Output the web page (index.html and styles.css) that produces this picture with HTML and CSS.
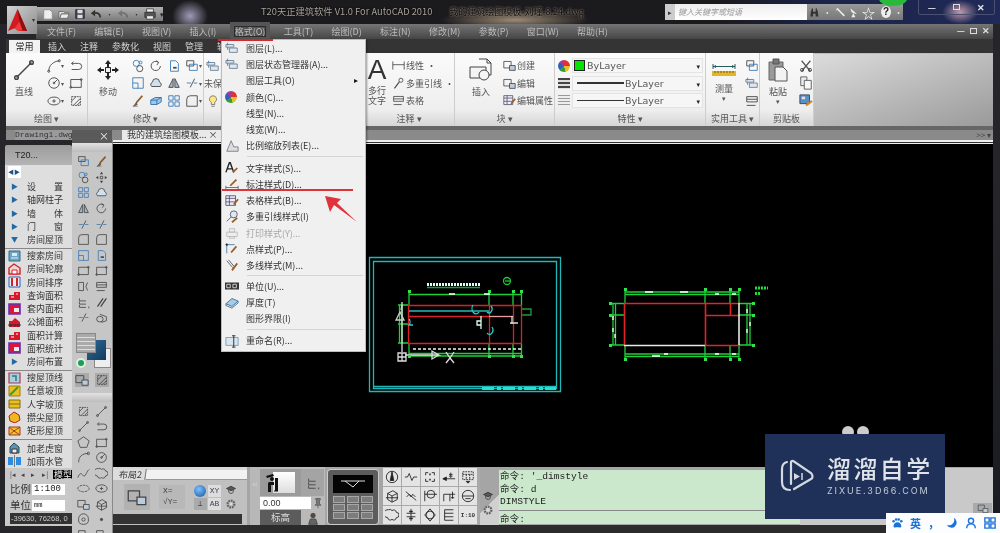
FILE: index.html
```html
<!DOCTYPE html>
<html lang="zh">
<head>
<meta charset="utf-8">
<title>T20天正建筑软件</title>
<link rel="stylesheet" href="styles.css">
</head>
<body>
<svg class="defs" width="0" height="0">
  <symbol id="line" viewBox="0 0 16 16"><path d="M3 13L13 3"/><circle cx="3" cy="13" r="1.200"/><circle cx="13" cy="3" r="1.200"/></symbol>
  <symbol id="move" viewBox="0 0 24 24"><path d="M9.500 9.500h5v5h-5z" fill="#eee" stroke="#222"/><path d="M12 2l3 4h-2v3h-2V6H9zM12 22l3-4h-2v-3h-2v3H9zM1 12l4-3v2h3v2H5v2zM23 12l-4-3v2h-3v2h3v2z" fill="#222" stroke="none"/></symbol>
  <symbol id="insert" viewBox="0 0 24 24"><path d="M10 1h8l4 4v12h-4"/><path d="M18 1v4h4"/><path d="M1 9h16v11H1z" fill="#f4f4f4"/><circle cx="15" cy="17" r="5" fill="#f4f4f4"/></symbol>
  <symbol id="paste" viewBox="0 0 24 24"><path d="M3 4h14v18H3z" fill="#9a9a9a" stroke="#666"/><path d="M7 1h6v5H7z" fill="#777" stroke="#555"/><path d="M9 9h8l4 4v10H9z" fill="#f3f3f3" stroke="#555"/></symbol>
  <symbol id="measure" viewBox="0 0 24 14"><path d="M1 1v5M23 1v5M1 3.500h22" stroke="#2a5a5a"/><path d="M1 3.500l3-1.500v3zM23 3.500l-3-1.500v3z" fill="#2a5a5a" stroke="none"/><path d="M0 8h24v5H0z" fill="#e3b62a" stroke="none"/><path d="M3 8v2M6 8v2M9 8v2M12 8v2M15 8v2M18 8v2M21 8v2" stroke="#7a5a10"/></symbol>
  <symbol id="arc" viewBox="0 0 16 16"><path d="M2 14C2 7 7 3 14 2"/><circle cx="2" cy="14" r="1.200"/><circle cx="14" cy="2" r="1.200"/></symbol>
  <symbol id="circ" viewBox="0 0 16 16"><circle cx="8" cy="8" r="6"/><path d="M8 8L12 4"/><circle cx="8" cy="8" r="1"/></symbol>
  <symbol id="ell" viewBox="0 0 16 16"><ellipse cx="8" cy="8" rx="7" ry="4.500"/><path d="M8 6v4M6 8h4"/></symbol>
  <symbol id="curl" viewBox="0 0 16 16"><path d="M3 5h8a3 3 0 0 1 0 7H3"/><path d="M5 3L3 5l2 2"/></symbol>
  <symbol id="rect" viewBox="0 0 16 16"><path d="M2 4h12v9H2z"/><circle cx="14" cy="4" r="1"/><circle cx="2" cy="13" r="1"/></symbol>
  <symbol id="hatch" viewBox="0 0 16 16"><path d="M3 3h10v10H3z" stroke-dasharray="2 1"/><path d="M3 8l5-5M5 13l8-8M9 13l4-4"/></symbol>
  <symbol id="copyc" viewBox="0 0 16 16"><circle cx="6" cy="5" r="3.500" stroke="#3a79b8"/><circle cx="10" cy="11" r="3.500"/><circle cx="11" cy="4" r="1.600" stroke="#3a79b8"/></symbol>
  <symbol id="rot" viewBox="0 0 16 16"><path d="M13 8a5.300 5.300 0 1 1-2-4.200"/><path d="M8 2l3 2-2 3"/></symbol>
  <symbol id="stretch" viewBox="0 0 16 16"><path d="M4 2h6l3 3v9H4z" stroke="#3a79b8"/><path d="M7 10h4" stroke-width="2"/></symbol>
  <symbol id="squares" viewBox="0 0 16 16"><path d="M2 2h8v6H2z"/><path d="M5 6h9v7H5z" stroke="#3a79b8"/></symbol>
  <symbol id="scale" viewBox="0 0 16 16"><path d="M2 2h12v12H2z" stroke="#3a79b8"/><path d="M2 8h6v6" stroke="#3a79b8"/></symbol>
  <symbol id="cloud" viewBox="0 0 16 16"><path d="M3 12a3 3 0 0 1 1-5 4 4 0 0 1 8 0 3 3 0 0 1 1 5z" fill="#cfe0ef"/></symbol>
  <symbol id="mirror" viewBox="0 0 16 16"><path d="M7 3v10H2zM9 3v10h5z" fill="#9fb7cc"/></symbol>
  <symbol id="trim" viewBox="0 0 16 16"><path d="M2 8h5M10 8h4" stroke="#3a79b8"/><path d="M11 3L6 13"/></symbol>
  <symbol id="scissors" viewBox="0 0 16 16"><path d="M3 2l10 12M13 2L3 14" stroke="#555" stroke-width="1.400"/><circle cx="3.500" cy="12.500" r="1.800"/><circle cx="12.500" cy="12.500" r="1.800"/></symbol>
  <symbol id="copydoc" viewBox="0 0 16 16"><path d="M2 1h7v10H2z" fill="#eee" stroke="#555"/><path d="M6 5h8v10H6z" fill="#f7f7f7" stroke="#555"/></symbol>
  <symbol id="matchp" viewBox="0 0 16 16"><path d="M1 1h11v10H1z" fill="#5b8fc4" stroke="#345"/><path d="M3 3h4v3H3z" fill="#dde" stroke="none"/><path d="M15 8l-7 5" stroke="#d8831c" stroke-width="2.400"/></symbol>
  <symbol id="brush" viewBox="0 0 16 16"><path d="M13 2L6 10" stroke="#8a5a2a" stroke-width="2"/><path d="M6 10l-3 4 4-2z" fill="#c86a2a"/><path d="M2 14h6" stroke="#888"/></symbol>
  <symbol id="box3" viewBox="0 0 16 16"><path d="M2 7l5-3h7v5l-5 3H2z" fill="#9cc8ea" stroke="#2e6fa8"/><path d="M2 7h7v5M9 7l5-3" stroke="#2e6fa8"/></symbol>
  <symbol id="array" viewBox="0 0 16 16"><path d="M2 2h5v5H2zM9 2h5v5H9zM2 9h5v5H2zM9 9h5v5H9z" stroke="#3a79b8"/></symbol>
  <symbol id="fillet" viewBox="0 0 16 16"><path d="M2 14V6a4 4 0 0 1 4-4h8v12z"/></symbol>
  <symbol id="layer" viewBox="0 0 16 16"><path d="M1 4h9v3H1z" fill="#dfe8f0" stroke="#6a7f90"/><path d="M5 8h9v5H5z" fill="#dfe8f0" stroke="#6a7f90"/><path d="M3 2v3M3 7v3" stroke="#3a79b8"/></symbol>
  <symbol id="bulb" viewBox="0 0 16 16"><path d="M8 2a4 4 0 0 1 2 7.500V12H6V9.500A4 4 0 0 1 8 2z" fill="#ffe680" stroke="#777"/><path d="M6 14h4" stroke="#777"/></symbol>
  <symbol id="a-brush" viewBox="0 0 16 16"><path d="M1 13L5 2h1l4 11M3 9h5" stroke="#222" stroke-width="1.600"/><path d="M9 13l5-5" stroke="#9a5b26" stroke-width="2"/></symbol>
  <symbol id="dim-brush" viewBox="0 0 16 16"><path d="M1 12h14" stroke="#666"/><path d="M1 10v4M15 10v4" stroke="#666"/><path d="M13 3L6 10" stroke="#9a5b26" stroke-width="2"/></symbol>
  <symbol id="table-brush" viewBox="0 0 16 16"><path d="M1 2h11v11H1z" fill="#eef" stroke="#556"/><path d="M1 5h11M1 9h11M5 2v11" stroke="#556"/><path d="M15 6l-5 6" stroke="#9a5b26" stroke-width="2"/></symbol>
  <symbol id="mleader" viewBox="0 0 16 16"><circle cx="10" cy="5" r="4" fill="#dfe8ef" stroke="#556"/><path d="M7 8L2 13" stroke="#556"/><path d="M8 14l6-5" stroke="#9a5b26" stroke-width="2"/></symbol>
  <symbol id="leader" viewBox="0 0 16 16"><circle cx="11" cy="4" r="2.500"/><path d="M9 6L3 14" stroke-width="1.400"/></symbol>
  <symbol id="print-brush" viewBox="0 0 16 16"><path d="M2 7h12v5H2zM5 3h6v4H5zM5 12h6v2H5z" fill="#eee" stroke="#bbb"/></symbol>
  <symbol id="pt-brush" viewBox="0 0 16 16"><path d="M2 3h9M2 3v10" stroke="#4a78aa"/><circle cx="2" cy="3" r="1" fill="#111"/><path d="M13 5l-6 7" stroke="#9a5b26" stroke-width="2"/></symbol>
  <symbol id="ml-brush" viewBox="0 0 16 16"><path d="M2 2l7 8M4 1l7 8" stroke="#555"/><path d="M14 5l-6 8" stroke="#9a5b26" stroke-width="2"/></symbol>
  <symbol id="units" viewBox="0 0 16 16"><path d="M0 4h16v8H0z" fill="#333" stroke="none"/><path d="M2 6h4v4H2zM9 6h4v4H9z" stroke="#ddd"/></symbol>
  <symbol id="thick" viewBox="0 0 16 16"><path d="M1 10l7-6 7 3-7 6z" fill="#a8cbe6" stroke="#3a6d9a"/><path d="M1 10v2l7 3 7-6V7" stroke="#3a6d9a"/></symbol>
  <symbol id="rename" viewBox="0 0 16 16"><path d="M1 4h14v9H1z" fill="#d9e6f2" stroke="#7b9ab5"/><path d="M10 2v13M8 2h4M8 15h4" stroke="#222"/></symbol>
  <symbol id="scalelist" viewBox="0 0 16 16"><path d="M2 14L7 2l3 7h5v5z" fill="#ddd" stroke="#778"/></symbol>
  <symbol id="gear" viewBox="0 0 16 16"><circle cx="8" cy="8" r="4.500" stroke="#666" stroke-width="3" stroke-dasharray="2.400 1"/><circle cx="8" cy="8" r="1.500" fill="#ddd" stroke="none"/></symbol>
  <symbol id="hat" viewBox="0 0 16 16"><path d="M2 6l6-3 6 3-6 3z" fill="#555" stroke="#333"/><path d="M5 8v3c2 2 4 2 6 0V8" stroke="#333"/></symbol>
  <symbol id="north" viewBox="0 0 16 16"><circle cx="8" cy="8" r="6.500"/><path d="M8 2l2 10H6z" fill="#222"/></symbol>
  <symbol id="wave" viewBox="0 0 16 16"><path d="M1 8h3l2-4 3 8 2-4h4"/></symbol>
  <symbol id="brack" viewBox="0 0 16 16"><path d="M3 6V3h3M10 3h3v3M13 10v3h-3M6 13H3v-3"/><path d="M8 4v2M8 10v2" stroke-width="1.600"/></symbol>
  <symbol id="elev" viewBox="0 0 16 16"><path d="M1 10h14"/><path d="M1 10l4-2v4z" fill="#222"/><path d="M10 9V3M8 5h4M8 7h4"/></symbol>
  <symbol id="tbl" viewBox="0 0 16 16"><path d="M2 2h12v9H2zM2 5h12M6 5v6M10 5v6" stroke-dasharray="2 1"/><path d="M6 13h4l-2 2z" fill="#222"/></symbol>
  <symbol id="cube" viewBox="0 0 16 16"><path d="M3 5l6-3 5 3v7l-6 3-5-3zM3 5l5 3 6-3M8 8v7"/><path d="M1 10h14"/></symbol>
  <symbol id="zig" viewBox="0 0 16 16"><path d="M2 3l12 10M3 9l3-3 2 3 2-3 3 3"/></symbol>
  <symbol id="cline" viewBox="0 0 16 16"><circle cx="9" cy="6" r="4.500"/><path d="M2 2v12M2 6h14"/></symbol>
  <symbol id="stair" viewBox="0 0 16 16"><path d="M2 14V6h7v8M9 6h6M12 3v8M10 10h4"/></symbol>
  <symbol id="cbar" viewBox="0 0 16 16"><circle cx="8" cy="8" r="6.500"/><path d="M2 8h12M5 11h6"/></symbol>
  <symbol id="blob" viewBox="0 0 16 16"><path d="M4 2a3 3 0 0 1 4 1 3 3 0 0 1 5 2 3 3 0 0 1 0 6 3 3 0 0 1-5 2 3 3 0 0 1-5-2 3 3 0 0 1 1-9z"/></symbol>
  <symbol id="axis" viewBox="0 0 16 16"><path d="M8 1v14M3 6h10M3 10h10"/><path d="M6 4h4M6 12h4" stroke-width="1.600"/></symbol>
  <symbol id="arrows" viewBox="0 0 16 16"><path d="M6.500 6.500h3v3h-3z"/><path d="M8 1l2 3H6zM8 15l2-3H6zM1 8l3-2v4zM15 8l-3-2v4z" fill="#444" stroke="none"/></symbol>
  <symbol id="diam" viewBox="0 0 16 16"><circle cx="8" cy="8" r="4.500"/><path d="M8 1l6 7-6 7-6-7z"/></symbol>
  <symbol id="lines" viewBox="0 0 16 16"><path d="M3 2v12M3 2h10M3 6h10M3 10h10M3 14h10"/></symbol>
  <symbol id="person" viewBox="0 0 16 16"><circle cx="8" cy="4" r="2.500" fill="#5a4a3a"/><path d="M3 14l2-6h6l2 6z" fill="#666"/></symbol>
  <symbol id="surveyor" viewBox="0 0 14 20"><path d="M1 3l7-2 1 2-7 2z" fill="#111" stroke="none"/><circle cx="7" cy="6" r="2" fill="#111" stroke="none"/><path d="M4 9h5v3H6v7H3V10zM10 5h3v13h-3z" fill="#111" stroke="none"/><path d="M9 18h4" stroke="#111"/></symbol>
  <symbol id="pin" viewBox="0 0 16 16"><path d="M5 2h6v2l-1 1v4l2 2H4l2-2V5L5 4zM8 11v4" fill="#777" stroke="#555"/></symbol>
  <symbol id="pent" viewBox="0 0 16 16"><path d="M8 1l7 5-3 8H4L1 6z"/></symbol>
  <symbol id="spline" viewBox="0 0 16 16"><path d="M1 13c3-8 5-4 7-2s4-6 7-8"/></symbol>
  <symbol id="crv" viewBox="0 0 16 16"><path d="M2 14C2 7 6 3 14 3"/><circle cx="14" cy="3" r="1.500"/></symbol>
  <symbol id="ell2" viewBox="0 0 16 16"><path d="M1 8a7 4 0 0 1 14 0M15 8a7 4 0 0 1-14 0" stroke-dasharray="3 1"/></symbol>
  <symbol id="ins" viewBox="0 0 16 16"><path d="M1 3h9v8H1z"/><path d="M8 8h7v6H8z" fill="#bcd"/></symbol>
  <symbol id="wb" viewBox="0 0 16 16"><path d="M2 7a6 6 0 0 1 12 0v3a6 4 0 0 1-12 0z"/><circle cx="8" cy="8" r="2"/></symbol>
  <symbol id="dot" viewBox="0 0 16 16"><circle cx="8" cy="8" r="1.400" fill="#444"/></symbol>
  <symbol id="dims" viewBox="0 0 16 16"><path d="M2 3h6M2 3v10h6M8 3v10M11 8l2-5M11 8l2 5"/></symbol>
  <symbol id="dims2" viewBox="0 0 16 16"><path d="M2 3h12v6H2zM2 6h12M2 13h10"/></symbol>
  <symbol id="dims3" viewBox="0 0 16 16"><path d="M3 3v3h8M3 7v3h8M3 11v3h8"/><path d="M14 14h1" stroke-width="2"/></symbol>
  <symbol id="linear" viewBox="0 0 16 16"><path d="M1 3v10M15 3v10M1 7h14"/></symbol>
  <symbol id="slash" viewBox="0 0 16 16"><path d="M3 13L10 3M7 13l7-10" stroke-width="1.500"/></symbol>
  <symbol id="cyl" viewBox="0 0 16 16"><ellipse cx="6" cy="10" rx="4" ry="3.500"/><path d="M6 4l8 3v5l-6 2"/></symbol>

  <symbol id="q-new" viewBox="0 0 14 14"><path d="M2 2h7l3 3v8H2z" fill="#eee" stroke="#888"/></symbol>
  <symbol id="q-open" viewBox="0 0 14 14"><path d="M1 4h5l1 1h5v2H4l-2 5H1z" fill="#ddd" stroke="#666"/><path d="M4 7h9l-2 5H2z" fill="#eee" stroke="#666"/></symbol>
  <symbol id="q-save" viewBox="0 0 14 14"><path d="M2 2h10v10H2z" fill="#445" stroke="#223"/><path d="M4 2h6v4H4zM4 8h6v4H4z" fill="#ddd" stroke="none"/></symbol>
  <symbol id="q-undo" viewBox="0 0 14 14"><path d="M12 11c0-4-3-6-7-5" stroke="#333" stroke-width="2"/><path d="M6 2L1 6l5 4z" fill="#333" stroke="none"/></symbol>
  <symbol id="q-print" viewBox="0 0 14 14"><path d="M3 1h8v4H3z" fill="#eee" stroke="#444"/><path d="M1 5h12v6H1z" fill="#555" stroke="#333"/><path d="M3 9h8v4H3z" fill="#eee" stroke="#444"/></symbol>
  <symbol id="binoc" viewBox="0 0 16 16"><path d="M2 14l1-9h3v9zM14 14l-1-9h-3v9zM6 7h4v3H6zM4 2h2v3H4zM10 2h2v3h-2z" fill="#333" stroke="none"/></symbol>
  <symbol id="wrench" viewBox="0 0 16 16"><path d="M3 2l3 3 8 8" stroke="#eee" stroke-width="2.400"/><path d="M2 5a3 3 0 0 1 3-3" stroke="#eee"/></symbol>
  <symbol id="dish" viewBox="0 0 16 16"><path d="M4 2c0 6 4 8 9 8z" fill="#eee" stroke="none"/><path d="M8 9l-3 6h6z" fill="#eee" stroke="none"/></symbol>

  <symbol id="r1" viewBox="0 0 13 12"><path d="M1 1h11v10H1z" fill="#6aa7c4" stroke="#3b6a85"/><path d="M4 3h5v3H4z" fill="#dfeaf0" stroke="none"/><path d="M3 8h7" stroke="#dfeaf0"/></symbol>
  <symbol id="r2" viewBox="0 0 13 12"><path d="M1 11V5l5-4 6 4v6z" fill="#f3d5d5" stroke="#d0242c" stroke-width="1.400"/><path d="M4 7h5v4H4z" fill="#fff" stroke="#d0242c"/></symbol>
  <symbol id="r3" viewBox="0 0 13 12"><path d="M1 1h11v10H1z" fill="#eee" stroke="#2f5fb5"/><path d="M4 2v8" stroke="#d0242c" stroke-width="2"/><path d="M9 2v8" stroke="#d0242c" stroke-width="2"/></symbol>
  <symbol id="r4" viewBox="0 0 13 12"><path d="M1 11V6h5V3h6v8z" fill="#d8182a" stroke="none"/><path d="M3 8h3M8 5h2" stroke="#fff"/></symbol>
  <symbol id="r5" viewBox="0 0 13 12"><path d="M1 1h11v10H1z" fill="#d8183a" stroke="#6a2fb5" stroke-width="1.600"/><path d="M6 5h5v4H6z" fill="#eee" stroke="none"/></symbol>
  <symbol id="r6" viewBox="0 0 13 12"><path d="M1 11V5h3l3-3 5 4v5z" fill="#d8182a" stroke="none"/><path d="M0 9h13M3 11V8M7 11V8M10 11V8" stroke="#333"/></symbol>
  <symbol id="t1" viewBox="0 0 13 12"><path d="M1 1h11v10H1z" fill="#a9cfd9" stroke="#a83a5a" stroke-width="1.200"/><path d="M4 4h4v5" stroke="#2b7a95" stroke-width="1.500"/></symbol>
  <symbol id="t2" viewBox="0 0 13 12"><path d="M1 11V1h11v10z" fill="#e8c020" stroke="#a37a10"/><path d="M2 10l8-8" stroke="#3a9a3a" stroke-width="2"/></symbol>
  <symbol id="t3" viewBox="0 0 13 12"><path d="M1 2h11v8H1z" fill="#e8c020" stroke="#8a6a10"/><path d="M1 6h11" stroke="#8a6a10"/></symbol>
  <symbol id="t4" viewBox="0 0 13 12"><path d="M6 1l5 3 1 5-5 3-5-2-1-5z" fill="#f0b820" stroke="#b52020"/></symbol>
  <symbol id="t5" viewBox="0 0 13 12"><path d="M1 2h11v8H1z" fill="#f0c030" stroke="#a83a20"/><path d="M1 2l5 4 6-4M1 10l5-4M12 10L6 6" stroke="#a83a20"/></symbol>
  <symbol id="t6" viewBox="0 0 13 12"><path d="M2 5l4-4 5 4v6H2z" fill="#5a94b0" stroke="#2a4a5a"/><path d="M4 7h5v4H4z" fill="#eee" stroke="#333"/></symbol>
  <symbol id="t7" viewBox="0 0 13 12"><path d="M0 2h5v8H0zM8 2h5v8H8z" fill="#2c8ce0" stroke="none"/><path d="M6.500 0v12" stroke="#777"/></symbol>
</svg>

<div class="app">
  <div class="titlebar">
    <div class="logo">
      <svg class="logo-a" viewBox="0 0 22 26"><path d="M10 1L0 24l7-3 4 3 9 0z" fill="#d01c20" stroke="none"/><path d="M10 1l10 23-5-1-3-9z" fill="#8e0e12" stroke="none"/><path d="M7 21l5-7 3 9-4 1z" fill="#f03a3a" stroke="none"/></svg>
      <span class="logo-caret">▾</span>
    </div>
    <div class="qat">
      <svg class="q"><use href="#q-new"/></svg><svg class="q"><use href="#q-open"/></svg><svg class="q"><use href="#q-save"/></svg><svg class="q"><use href="#q-undo"/></svg><i>·</i><svg class="q faint"><use href="#q-undo"/></svg><i>·</i><svg class="q"><use href="#q-print"/></svg><i>▾</i>
    </div>
    <div class="title">T20天正建筑软件 V1.0 For AutoCAD 2010<span class="title-file">我的建筑绘图模板-刘瑾-8.24.dwg</span></div>
    <div class="search"><span class="search-arrow">▸</span><span class="search-hint">键入关键字或短语</span></div>
    <div class="helpbar">
      <svg class="h"><use href="#binoc"/></svg><i>·</i><svg class="h"><use href="#wrench"/></svg><svg class="h"><use href="#dish"/></svg><span class="star">☆</span><span class="qmark">?</span><i>·</i>
    </div>
    <div class="winbtns"><span>—</span><span class="sq"></span><span class="x">✕</span></div>
    <span class="greenblob"></span>
  </div>

  <div class="menubar">
    <span>文件(F)</span><span>编辑(E)</span><span>视图(V)</span><span>插入(I)</span><span class="active">格式(O)</span><span>工具(T)</span><span>绘图(D)</span><span>标注(N)</span><span>修改(M)</span><span>参数(P)</span><span>窗口(W)</span><span>帮助(H)</span>
    <div class="docbtns"><span>—</span><span class="sq"></span><span>✕</span></div>
  </div>

  <div class="tabstrip">
    <span class="tab on">常用</span><span class="tab">插入</span><span class="tab">注释</span><span class="tab">参数化</span><span class="tab">视图</span><span class="tab">管理</span><span class="tab">输出</span>
  </div>

  <div class="ribbon">
    <section class="panel p-draw">
      <div class="pbody">
        <div class="big"><svg class="bigi"><use href="#line"/></svg><b>直线</b></div>
        <div class="g2">
          <span class="b c"><svg><use href="#arc"/></svg></span><span class="b"><svg><use href="#curl"/></svg></span>
          <span class="b c"><svg><use href="#circ"/></svg></span><span class="b"><svg><use href="#rect"/></svg></span>
          <span class="b c"><svg><use href="#ell"/></svg></span><span class="b"><svg><use href="#hatch"/></svg></span>
        </div>
      </div>
      <footer>绘图 ▾</footer>
    </section>
    <section class="panel p-mod">
      <div class="pbody">
        <div class="big move"><svg class="bigi"><use href="#move"/></svg><b>移动</b></div>
        <div class="g4">
          <span class="b"><svg><use href="#copyc"/></svg></span><span class="b"><svg><use href="#rot"/></svg></span><span class="b"><svg><use href="#stretch"/></svg></span><span class="b c"><svg><use href="#squares"/></svg></span>
          <span class="b"><svg><use href="#scale"/></svg></span><span class="b"><svg><use href="#cloud"/></svg></span><span class="b"><svg><use href="#mirror"/></svg></span><span class="b c"><svg><use href="#trim"/></svg></span>
          <span class="b"><svg><use href="#brush"/></svg></span><span class="b"><svg><use href="#box3"/></svg></span><span class="b"><svg><use href="#array"/></svg></span><span class="b c"><svg><use href="#fillet"/></svg></span>
        </div>
      </div>
      <footer>修改 ▾</footer>
    </section>
    <section class="panel p-layer">
      <div class="pbody col">
        <span class="b"><svg><use href="#layer"/></svg></span>
        <span class="b txt">未保</span>
        <span class="b"><svg><use href="#bulb"/></svg></span>
      </div>
      <footer></footer>
    </section>
    <section class="panel p-note">
      <div class="pbody">
        <div class="big bigA"><span class="aa">A</span><b>多行<br>文字</b></div>
        <div class="rows">
          <span class="r"><svg><use href="#linear"/></svg>线性 <i>·</i></span>
          <span class="r"><svg><use href="#leader"/></svg>多重引线 <i>·</i></span>
          <span class="r"><svg><use href="#dims2"/></svg>表格</span>
        </div>
      </div>
      <footer>注释 ▾</footer>
    </section>
    <section class="panel p-block">
      <div class="pbody">
        <div class="big ins"><svg class="bigi"><use href="#insert"/></svg><b>插入</b></div>
        <div class="rows">
          <span class="r"><svg><use href="#ins"/></svg>创建</span>
          <span class="r"><svg><use href="#ins"/></svg>编辑</span>
          <span class="r"><svg><use href="#table-brush"/></svg>编辑属性 <i>·</i></span>
        </div>
      </div>
      <footer>块 ▾</footer>
    </section>
    <section class="panel p-prop">
      <div class="pbody props">
        <div class="prow"><span class="wheel"></span><div class="combo"><span class="swatch"></span><span>ByLayer</span><i>▾</i></div></div>
        <div class="prow"><span class="bars"></span><div class="combo"><span class="ln thick-ln"></span><span>ByLayer</span><i>▾</i></div></div>
        <div class="prow"><span class="bars dash"></span><div class="combo"><span class="ln"></span><span>ByLayer</span><i>▾</i></div></div>
      </div>
      <footer>特性 ▾</footer>
    </section>
    <section class="panel p-util">
      <div class="pbody">
        <div class="big meas"><svg class="ruler"><use href="#measure"/></svg><b>测量</b><u>▾</u></div>
        <div class="col tight">
          <span class="b"><svg><use href="#squares"/></svg></span><span class="b"><svg><use href="#layer"/></svg></span><span class="b"><svg><use href="#dims2"/></svg></span>
        </div>
      </div>
      <footer>实用工具 ▾</footer>
    </section>
    <section class="panel p-clip">
      <div class="pbody">
        <div class="big paste"><svg class="bigi"><use href="#paste"/></svg><b>粘贴</b><u>▾</u></div>
        <div class="col tight">
          <span class="b"><svg><use href="#scissors"/></svg></span><span class="b"><svg><use href="#copydoc"/></svg></span><span class="b"><svg><use href="#matchp"/></svg></span>
        </div>
      </div>
      <footer>剪贴板</footer>
    </section>
    <div class="ribbon-rest"></div>
  </div>

  <div class="doctabs">
    <span class="dtab">Drawing1.dwg</span>
    <span class="dtab cur">我的建筑绘图模板... ×</span>
    <span class="more">&gt;&gt; ▾</span>
  </div>

  <div class="work">
    <div class="dock">
      <div class="dock-head">T20...</div>
      <div class="dock-list">
        <div class="toggle"><span>◀</span><span>▶</span></div>
        <div class="li"><em>▶</em><span>设置</span></div>
        <div class="li"><em>▶</em><span>轴网柱子</span></div>
        <div class="li"><em>▶</em><span>墙体</span></div>
        <div class="li"><em>▶</em><span>门窗</span></div>
        <div class="li open"><em>▼</em><span>房间屋顶</span></div>
        <div class="li"><svg><use href="#r1"/></svg><span>搜索房间</span></div>
        <div class="li"><svg><use href="#r2"/></svg><span>房间轮廓</span></div>
        <div class="li"><svg><use href="#r3"/></svg><span>房间排序</span></div>
        <div class="li"><svg><use href="#r4"/></svg><span>查询面积</span></div>
        <div class="li"><svg><use href="#r5"/></svg><span>套内面积</span></div>
        <div class="li"><svg><use href="#r6"/></svg><span>公摊面积</span></div>
        <div class="li"><svg><use href="#r4"/></svg><span>面积计算</span></div>
        <div class="li"><svg><use href="#r5"/></svg><span>面积统计</span></div>
        <div class="li open"><em>▶</em><span>房间布置</span></div>
        <div class="li"><svg><use href="#t1"/></svg><span>搜屋顶线</span></div>
        <div class="li"><svg><use href="#t2"/></svg><span>任意坡顶</span></div>
        <div class="li"><svg><use href="#t3"/></svg><span>人字坡顶</span></div>
        <div class="li"><svg><use href="#t4"/></svg><span>攒尖屋顶</span></div>
        <div class="li open"><svg><use href="#t5"/></svg><span>矩形屋顶</span></div>
        <div class="li next"><svg><use href="#t6"/></svg><span>加老虎窗</span></div>
        <div class="li"><svg><use href="#t7"/></svg><span>加雨水管</span></div>
      </div>
      <div class="dock-low">
        <div class="nav"><span>|◂</span><span>◂</span><span>▸</span><span>▸|</span><span class="model">模型</span></div>
        <div class="field"><label>比例</label><span class="inp">1:100</span></div>
        <div class="field small"><label>单位</label><span class="inp">mm</span></div>
        <div class="coords">-39630, 76268, 0</div>
      </div>
    </div>

    <div class="floatbar">
      <div class="fb-head">×</div>
      <div class="fb-grip"></div>
      <div class="fb-grid">
        <svg><use href="#squares"/></svg><svg><use href="#brush"/></svg>
        <svg><use href="#copyc"/></svg><svg><use href="#arrows"/></svg>
        <svg><use href="#array"/></svg><svg><use href="#cloud"/></svg>
        <svg><use href="#mirror"/></svg><svg><use href="#rot"/></svg>
        <svg><use href="#trim"/></svg><svg><use href="#trim"/></svg>
        <svg><use href="#fillet"/></svg><svg><use href="#fillet"/></svg>
        <svg><use href="#scale"/></svg><svg><use href="#stretch"/></svg>
        <svg><use href="#rect"/></svg><svg><use href="#rect"/></svg>
        <svg><use href="#dims"/></svg><svg><use href="#dims2"/></svg>
        <svg><use href="#dims3"/></svg><svg><use href="#slash"/></svg>
        <svg><use href="#trim"/></svg><svg><use href="#cyl"/></svg>
      </div>
      <div class="material">
        <span class="m3"></span><span class="m2"></span><span class="m1"></span><span class="mdot"></span>
      </div>
      <div class="mbtns"><svg><use href="#ins"/></svg><svg><use href="#hatch"/></svg></div>
      <div class="fb-grip low"></div>
      <div class="fb-grid second">
        <svg><use href="#hatch"/></svg><svg><use href="#line"/></svg>
        <svg><use href="#line"/></svg><svg><use href="#curl"/></svg>
        <svg><use href="#pent"/></svg><svg><use href="#rect"/></svg>
        <svg><use href="#crv"/></svg><svg><use href="#circ"/></svg>
        <svg><use href="#spline"/></svg><svg><use href="#blob"/></svg>
        <svg><use href="#ell2"/></svg><svg><use href="#ell"/></svg>
        <svg><use href="#ins"/></svg><svg><use href="#cube"/></svg>
        <svg><use href="#wb"/></svg><svg><use href="#dot"/></svg>
        <svg><use href="#squares"/></svg><svg><use href="#squares"/></svg>
      </div>
    </div>

    <div class="center">
      <div class="viewport">
        <svg class="cad" viewBox="113 145 880 322" width="880" height="322">
          <g fill="none" stroke-width="1.300">
            <path d="M369.500 257.500h191v134h-191zM373.500 261.500h183v127h-183z" stroke="#1fb8b8"/>
            <path d="M373 386.500h184" stroke="#1fb8b8"/>
            <path d="M482 388.500h74" stroke="#23e0d0" stroke-width="3" stroke-dasharray="12 3 4 2"/>
            <path d="M427 284.500h53" stroke="#dff" stroke-width="3" stroke-dasharray="2 1"/>
            <path d="M427 287.500h53" stroke="#1e9a3a"/>
            <circle cx="507" cy="281" r="3.500" stroke="#1ec83a"/>
            <path d="M505 281h6" stroke="#1ec83a"/>
            <path d="M409 294.500h113M409 292v13M409 343v13M489 291v14M489 343v13M513 292v13M513 343v13M521.500 291v14M521.500 343v13M409 353.500h113M409 356h113" stroke="#1fcf3a"/>
            <path d="M399.500 305v38M402 305v38M398 305h10M398 343h10M398 324h10" stroke="#1fcf3a"/>
            <path d="M522 309h9v6h-9" stroke="#1f9a3a"/>
            <path d="M449 294h6M484 294h6" stroke="#fff"/>
            <path d="M413 349h108" stroke="#e8ffe8" stroke-dasharray="3 2"/>
            <path d="M408 305.500h114M408 343.500h114M408.500 305v38M489.500 305v38M513.500 305v38M521.500 305v38M408 316.500h81" stroke="#d8222a"/>
            <path d="M409 311h80" stroke="#2ab8b8"/>
            <path d="M489 316.500h24" stroke="#ef9ca0"/>
            <path d="M481 316v13M481 321h-4v4h4" stroke="#dfe"/>
            <path d="M402 302v50M398 353h8v8h-8zM402 353v8M398 357h8" stroke="#ddd"/>
            <path d="M405 355h29l5 0-7-4v8l7-4" stroke="#ddd"/>
            <path d="M446 352l4 6 4-6M450 358l-4 5M450 358l4 5" stroke="#ddd"/>
            <path d="M404 320l-4-8-4 8zM402 305l-1 5" stroke="#ccc"/>
            <path d="M409 319a3 4 0 0 1 0 6h4M473 305a3 4 0 0 0 6 7M491 306a3 4 0 0 1-4 6M492 327a3 4 0 0 1-5 6" stroke="#2dc9c9"/>
            <path d="M512 316v8M510 323h8" stroke="#ddd"/>
            <path d="M625 292h114M625 294.500h114M625 354h114M625 356.500h114M625 289v14M625 345v15M705 289v14M705 345v15M730 289v14M730 345v15M739 289v14M739 345v15M613 303v42M615.500 303v42M610 303.500h14M610 345h14M610 315h14M747 303v42M750 303v42M739 303.500h14M739 345h14M739 315h14" stroke="#1fcf3a"/>
            <path d="M624.500 303v42M624 303.500h115M705.500 303v42M705 315.500h34M730.500 303v12M705 345.500h34" stroke="#e0242a" stroke-width="1.600"/>
            <path d="M624 345.500h81M739 303v42" stroke="#e8e8e8" stroke-width="1.600"/>
            <path d="M645 292h8M680 292h8M652 356h8M715 294h4M732 294h4M664 354h4M715 354h4M732 354h4M613 316v4M613 328v4M615 334v4M747 309v4M750 322v4M747 329v4" stroke="#fff"/>
            <path d="M755 288h13" stroke="#18e038" stroke-width="3" stroke-dasharray="2 1"/>
            <path d="M755 293.500h6" stroke="#18e038" stroke-width="3" stroke-dasharray="2 1"/>
          </g>
          <g fill="#2fe34a">
            <rect x="408" y="290" width="3" height="3"/><rect x="488" y="290" width="3" height="3"/><rect x="512" y="290" width="3" height="3"/><rect x="520" y="290" width="3" height="3"/>
            <rect x="408" y="355" width="3" height="3"/><rect x="488" y="355" width="3" height="3"/><rect x="512" y="355" width="3" height="3"/><rect x="520" y="355" width="3" height="3"/>
            <rect x="624" y="288" width="3" height="3"/><rect x="704" y="288" width="3" height="3"/><rect x="729" y="288" width="3" height="3"/><rect x="738" y="288" width="3" height="3"/>
            <rect x="624" y="358" width="3" height="3"/><rect x="704" y="358" width="3" height="3"/><rect x="729" y="358" width="3" height="3"/><rect x="738" y="358" width="3" height="3"/>
            <rect x="609" y="302" width="3" height="3"/><rect x="609" y="314" width="3" height="3"/><rect x="609" y="344" width="3" height="3"/>
            <rect x="752" y="302" width="3" height="3"/><rect x="752" y="314" width="3" height="3"/><rect x="752" y="344" width="3" height="3"/>
          </g>
          <g fill="#ccc"><ellipse cx="848" cy="432" rx="6" ry="6"/><ellipse cx="863" cy="432" rx="6" ry="6"/></g>
        </svg>
      </div>

      <div class="status">
        <div class="st-left">
          <div class="layouts"><span class="ltab">布局2</span><span class="lfill"></span></div>
          <div class="st-tools">
            <span class="bigbtn"><svg><use href="#ins"/></svg></span>
            <span class="frac"><i>X=</i><i>√Y=</i></span>
            <span class="xy"><span class="globe"></span><span class="mono">XY</span><span class="mono faint2">⊥</span><span class="mono">AB</span></span>
            <span class="hatcol"><svg><use href="#hat"/></svg><svg><use href="#gear"/></svg></span>
          </div>
          <div class="st-bar"></div>
        </div>
        <div class="handle">‹‹</div>
        <div class="st-elev">
          <span class="el-main"><span class="el-box"></span><svg><use href="#surveyor"/></svg></span>
          <span class="el-side"><svg><use href="#dims3"/></svg></span>
          <span class="el-input">0.00</span>
          <span class="el-pin"><svg><use href="#pin"/></svg></span>
          <span class="el-label">标高</span>
          <span class="el-side2"><svg><use href="#person"/></svg></span>
        </div>
        <div class="st-pad">
          <div class="lcd"><svg viewBox="0 0 40 18"><path d="M8 6h24M12 6l8 6 6-6" stroke="#ddd" fill="none"/></svg></div>
          <div class="padbtns"><span></span><span></span><span></span><span></span><span></span><span></span><span></span><span></span><span></span></div>
        </div>
        <div class="st-grid">
          <span><svg><use href="#north"/></svg></span><span><svg><use href="#wave"/></svg></span><span><svg><use href="#brack"/></svg></span><span><svg><use href="#elev"/></svg></span><span><svg><use href="#tbl"/></svg></span>
          <span><svg><use href="#cube"/></svg></span><span><svg><use href="#zig"/></svg></span><span><svg><use href="#cline"/></svg></span><span><svg><use href="#stair"/></svg></span><span><svg><use href="#cbar"/></svg></span>
          <span><svg><use href="#blob"/></svg></span><span><svg><use href="#axis"/></svg></span><span><svg><use href="#diam"/></svg></span><span><svg><use href="#lines"/></svg></span><span class="i110">I:10</span>
        </div>
        <div class="st-gears"><svg><use href="#hat"/></svg><svg><use href="#gear"/></svg></div>
        <div class="cmd">
          <div class="cmd-hist"><p>命令: '_dimstyle</p><p>命令: d</p><p>DIMSTYLE</p></div>
          <div class="cmd-in">命令:</div>
        </div>
        <div class="st-right">
          <span class="carbtn"><svg><use href="#ins"/></svg></span>
        </div>
      </div>
      <div class="basebar"></div>
    </div>
    <div class="rightedge"></div>
  </div>

  <div class="menu">
    <div class="mi"><svg><use href="#layer"/></svg><span>图层(L)...</span></div>
    <div class="mi"><svg><use href="#layer"/></svg><span>图层状态管理器(A)...</span></div>
    <div class="mi arrow"><span class="noi"></span><span>图层工具(O)</span></div>
    <div class="mi"><span class="wheel mw"></span><span>颜色(C)...</span></div>
    <div class="mi"><span class="noi"></span><span>线型(N)...</span></div>
    <div class="mi"><span class="noi"></span><span>线宽(W)...</span></div>
    <div class="mi"><svg><use href="#scalelist"/></svg><span>比例缩放列表(E)...</span></div>
    <hr>
    <div class="mi"><svg><use href="#a-brush"/></svg><span>文字样式(S)...</span></div>
    <div class="mi"><svg><use href="#dim-brush"/></svg><span>标注样式(D)...</span></div>
    <div class="mi"><svg><use href="#table-brush"/></svg><span>表格样式(B)...</span></div>
    <div class="mi"><svg><use href="#mleader"/></svg><span>多重引线样式(I)</span></div>
    <div class="mi off"><svg><use href="#print-brush"/></svg><span>打印样式(Y)...</span></div>
    <div class="mi"><svg><use href="#pt-brush"/></svg><span>点样式(P)...</span></div>
    <div class="mi"><svg><use href="#ml-brush"/></svg><span>多线样式(M)...</span></div>
    <hr class="thin">
    <div class="mi"><svg><use href="#units"/></svg><span>单位(U)...</span></div>
    <div class="mi"><svg><use href="#thick"/></svg><span>厚度(T)</span></div>
    <div class="mi"><span class="noi"></span><span>图形界限(I)</span></div>
    <hr>
    <div class="mi"><svg><use href="#rename"/></svg><span>重命名(R)...</span></div>
  </div>

  <svg class="anno" viewBox="0 0 1000 533" width="1000" height="533">
    <path d="M218 40h55" stroke="#d8262c" stroke-width="2"/>
    <path d="M222 190h131" stroke="#e0323a" stroke-width="2"/>
    <path d="M325 196l16 3-4 4 20 19-23-17-4 7z" fill="#e0323a"/>
  </svg>

  <div class="wm">
    <svg class="wm-logo" viewBox="0 0 60 60"><path d="M17 17C13 18 12 21 12 24V37C12 42 15 45 20 45" fill="none" stroke="#d4d9e2" stroke-width="2.200" stroke-linecap="round"/><path d="M21 17V39M21 17C21 16 22 15.500 24 16.500L41 28C43 30 43 33 41 34L24 44" fill="none" stroke="#d4d9e2" stroke-width="2.200" stroke-linecap="round"/><path d="M24 28L30 31.500L24 35z" fill="#d4d9e2"/><path d="M32 28V35" stroke="#d4d9e2" stroke-width="1.500"/></svg>
    <div class="wm-text"><div class="wm-cn">溜溜自学</div><div class="wm-en">ZIXUE.3D66.COM</div></div>
  </div>

  <div class="ime">
    <svg viewBox="0 0 14 14"><circle cx="3" cy="5" r="1.500"/><circle cx="6" cy="3" r="1.500"/><circle cx="9" cy="3" r="1.500"/><circle cx="12" cy="5" r="1.500"/><path d="M3 11c0-4 3-5 4.500-5S12 7 12 11c0 2-3 1-4.500 1S3 13 3 11z"/></svg>
    <span>英</span><span>，</span>
    <svg viewBox="0 0 14 14"><path d="M9 1a6 6 0 1 1-8 8 6 6 0 0 0 8-8z"/></svg>
    <svg viewBox="0 0 14 14" class="ol"><circle cx="7" cy="4.500" r="3"/><path d="M2 13c0-3 2-5 5-5s5 2 5 5"/></svg>
    <svg viewBox="0 0 14 14" class="ol"><path d="M1 1h5v5H1zM8 1h5v5H8zM1 8h5v5H1zM8 8h5v5H8z"/></svg>
  </div>
</div>
</body>
</html>
```

FILE: styles.css
```css
* { box-sizing: border-box; }
html, body { margin: 0; padding: 0; background: #222; }
body { font-family: "Noto Sans CJK SC", "Noto Sans", sans-serif; font-size: 9px; line-height: 1; }
.defs { position: absolute; }
svg { fill: none; stroke: #444; stroke-width: 1; }
i, em, u { font-style: normal; text-decoration: none; }

.app { position: relative; width: 1000px; height: 533px; overflow: hidden; display: flex; flex-direction: column; background: #26262a; filter: blur(.35px); }

/* title bar */
.titlebar { height: 24px; flex: none; display: flex; align-items: flex-start; position: relative;
  background:
    radial-gradient(ellipse 18px 16px at 190px 16px, #a09ab8, transparent),
    radial-gradient(ellipse 75px 10px at 515px 20px, #9c8a74, transparent),
    radial-gradient(ellipse 18px 12px at 960px 12px, #c09aaa, transparent),
    linear-gradient(90deg, #1b1a1d 0, #1b1a1d 72%, #1a2348 82%, #202a58 100%); }
.logo { width: 30px; height: 28px; margin: 6px 0 0 7px; background: linear-gradient(135deg, #d2d2d2, #8b8b8b); position: relative; z-index: 3; display: flex; align-items: center; padding-left: 1px; flex: none; }
.logo-a { width: 21px; height: 25px; stroke: none; }
.logo-caret { position: absolute; right: 2px; top: 11px; font-size: 6px; color: #333; }
.qat { width: 126px; height: 14px; margin-top: 7px; background: linear-gradient(#b0b0b0, #7a7a7a); display: flex; align-items: center; gap: 4px; padding-left: 5px; color: #333; flex: none; }
.qat .q { width: 12px; height: 12px; flex: none; }
.qat .faint { opacity: .35; }
.qat i { font-size: 7px; color: #222; }
.title { width: 404px; margin: 5px 0 0 98px; font-size: 9.300px; line-height: 13px; color: #a6a29a; white-space: pre; text-shadow: 0 0 2px #000; flex: none; }
.title-file { margin-left: 17px; color: #0e0a08; font-size: 9px; text-shadow: 0 0 2px #cdbfae; }
.search { width: 142px; height: 16px; margin: 4px 0 0 0; background: linear-gradient(#eee, #fff); display: flex; align-items: center; flex: none; }
.search-arrow { width: 10px; background: #ccc; height: 100%; font-size: 7px; line-height: 16px; text-align: center; color: #333; }
.search-hint { margin-left: 3px; font-size: 8px; color: #999; font-style: italic; }
.helpbar { width: 96px; height: 16px; margin-top: 4px; background: linear-gradient(#999, #777); display: flex; align-items: center; gap: 3px; padding-left: 2px; color: #ddd; flex: none; }
.helpbar .h { width: 13px; height: 13px; }
.star { font-size: 13px; color: #fff; }
.qmark { width: 12px; height: 12px; border-radius: 50%; background: #eee; color: #222; font: bold 10px/12px "Liberation Sans", sans-serif; text-align: center; margin-left: 3px; }
.winbtns { position: absolute; left: 918px; top: -1px; width: 77px; height: 16px; border: 1px solid #4a5070; border-radius: 2px; display: flex; align-items: center; justify-content: space-around; color: #e8e8e8; font-size: 9px; font-weight: bold; }
.winbtns .sq, .docbtns .sq { width: 7px; height: 6px; border: 1px solid #ddd; }
.greenblob { position: absolute; left: 879px; top: -8px; width: 28px; height: 14px; border-radius: 50%; background: #29b93b; }

/* menu bar */
.menubar { height: 15px; flex: none; margin-left: 36px; margin-right: 7px; padding-left: 11px; display: flex; align-items: center; gap: 18.300px; color: #bdbdbd; background: linear-gradient(#757575, #454545); position: relative; }
.menubar .active { outline: 1px solid #2c2c2c; background: #555; box-shadow: 0 0 0 5px #555; }
.docbtns { position: absolute; right: 3px; top: 2px; display: flex; gap: 5px; align-items: center; color: #ddd; font-weight: bold; }

/* ribbon tabs */
.tabstrip { height: 14px; flex: none; margin: 0 7px 0 6px; background: #343434; display: flex; align-items: flex-end; gap: 14px; padding-left: 3px; color: #d0d0d0; font-size: 9px; }
.tab { height: 13px; line-height: 13px; }
.tab.on { background: #f2f2f2; color: #222; padding: 0 6.500px; margin-right: -6px; }

/* ribbon */
.ribbon { height: 73px; flex: none; margin: 0 7px 0 6px; display: flex; color: #555; }
.panel { display: flex; flex-direction: column; background: linear-gradient(#fbfbfb, #eaeaea); border-right: 1px solid #cdcdcd; flex: none; }
.panel footer { height: 15px; flex: none; background: linear-gradient(#ececec, #d6d6d6); text-align: center; font-size: 9px; line-height: 15px; color: #555; }
.pbody { flex: 1; display: flex; align-items: flex-start; min-height: 0; }
.p-draw { width: 82px; }
.p-mod { width: 116px; }
.p-layer { width: 160px; }
.p-note { width: 91px; }
.p-block { width: 100px; }
.p-prop { width: 151px; }
.p-util { width: 54px; }
.p-clip { width: 54px; }
.ribbon-rest { flex: 1; background: linear-gradient(160deg, #dcdcdc, #9a9a9a); border-top: 1px solid #bbb; }
.big { display: flex; flex-direction: column; align-items: center; width: 34px; padding-top: 5px; flex: none; }
.big b { font-weight: normal; font-size: 9px; margin-top: 5px; line-height: 10px; text-align: center; }
.big u { font-size: 7px; margin-top: 1px; }
.bigi { width: 24px; height: 24px; }
.b { width: 18px; height: 17.500px; display: flex; align-items: center; justify-content: center; flex: none; }
.b svg { width: 14px; height: 14px; }
.b.c { width: 22px; justify-content: flex-start; padding-left: 2px; position: relative; }
.b.c::after { content: "▾"; font-size: 6px; position: absolute; right: 3px; top: 6px; }
.g2 { display: grid; grid-template-columns: 22px 18px; margin: 4px 0 0 3px; }
.g4 { display: grid; grid-template-columns: 18px 18px 18px 22px; margin: 4px 0 0 4px; }
.p-draw .big { width: 36px; }
.move { margin-left: 3px; }
.col { display: flex; flex-direction: column; padding-top: 4px; }
.b.txt { font-size: 9px; width: auto; }
.big.bigA { width: 26px; padding-top: 4px; }
.aa { font: 28px/26px "Liberation Sans", sans-serif; color: #333; }
.big.bigA b { margin-top: 3px; }
.rows { display: flex; flex-direction: column; padding-top: 4px; margin-left: 2px; }
.r { height: 17.500px; display: flex; align-items: center; gap: 1px; font-size: 9px; white-space: nowrap; }
.r svg { width: 13px; height: 13px; flex: none; }
.r i { margin-left: 2px; }
.ins { margin-left: 9px; }
.p-block .rows { margin-left: 5px; }
.props { flex-direction: column; padding: 4px 2px 0 3px; }
.prow { height: 17.500px; width: 100%; display: flex; align-items: center; gap: 2px; }
.wheel { width: 12px; height: 12px; border-radius: 50%; background: conic-gradient(#d33 0 25%, #e8c020 25% 45%, #3a9a3a 45% 65%, #2d62c0 65% 85%, #a03aa0 85%); flex: none; }
.bars { width: 12px; height: 11px; flex: none; background: repeating-linear-gradient(#444 0 2px, #ddd 2px 4px); }
.bars.dash { background: repeating-linear-gradient(#999 0 1px, #eee 1px 3px); }
.combo { flex: 1; height: 15px; background: #f6f6f6; border: 1px solid #e3e3e3; display: flex; align-items: center; font: 9.500px "DejaVu Sans", sans-serif; color: #555; padding-left: 1px; position: relative; }
.combo i { position: absolute; right: 2px; top: 4px; font-size: 7px; color: #222; }
.swatch { width: 11px; height: 11px; background: #00e600; border: 1px solid #222; margin-right: 2px; }
.ln { width: 47px; border-top: 1px solid #333; margin: 0 1px 0 3px; }
.thick-ln { border-top-width: 2px; }
.meas { width: 34px; margin-left: 1px; padding-top: 10px; }
.ruler { width: 24px; height: 14px; stroke: none; }
.big.meas b { margin-top: 7px; }
.tight { padding-top: 4px; margin-left: 2px; }
.paste { width: 36px; }
.p-clip .tight { margin-left: 1px; }
.p-util footer { white-space: nowrap; }

/* document tabs */
.doctabs { height: 14px; flex: none; margin: 0 7px 0 6px; background: linear-gradient(#666 0 4px, #8a8a8a 4px); display: flex; align-items: flex-end; position: relative; }
.dtab { height: 10px; font: 8px/10px "Liberation Mono", monospace; color: #333; }
.dtab:first-child { width: 58px; margin-left: 9px; overflow: hidden; background: #9a9a9a; }
.dtab.cur { width: 108px; margin-left: 49px; background: #e9e9e9; font-family: "Noto Sans CJK SC", sans-serif; font-size: 9px; padding-left: 5px; white-space: nowrap; }
.more { position: absolute; right: 2px; bottom: 1px; color: #444; font-size: 8px; }

/* work area */
.work { flex: 1; min-height: 0; display: flex; padding-left: 5px; }
.dock { width: 67px; flex: none; display: flex; flex-direction: column; margin-top: 5px; position: relative; }
.dock-head { height: 20px; flex: none; background: linear-gradient(#9c9c9c, #b4b4b4); font: 9px/20px "Liberation Sans", sans-serif; padding-left: 10px; color: #222; border-radius: 2px 2px 0 0; }
.dock-list { flex: 1; min-height: 0; background: #dedede; overflow: hidden; padding: 1px 0 0 3px; }
.toggle { height: 12px; width: 13px; margin-bottom: 2px; background: #fff; color: #1e4f91; display: flex; font-size: 6px; line-height: 12px; }
.li { height: 13.250px; display: flex; align-items: center; color: #333; }
.li em { width: 19px; font-size: 7px; color: #1d6aa8; padding-left: 3px; flex: none; }
.li svg { width: 13px; height: 12px; margin-right: 6px; flex: none; stroke: none; }
.li span { width: 36px; flex: none; text-align: justify; text-align-last: justify; white-space: nowrap; }
.li.open { border-bottom: 1px solid #888; height: 16px; margin-left: -3px; padding-left: 3px; padding-bottom: 2px; }
.li.next { margin-top: 1.500px; }
.dock-low { height: 58px; flex: none; background: #c8c8c8; padding: 2px 0 0 5px; display: flex; flex-direction: column; margin-bottom: 7px; }
.nav { display: flex; gap: 3px; height: 9px; margin-bottom: 2px; color: #444; font-size: 7px; line-height: 9px; flex: none; }
.nav span { width: 9px; }
.nav .model { background: #000; color: #eee; font-size: 9px; width: 22px; padding-left: 1px; }
.field { display: flex; align-items: center; height: 16px; font-size: 10.500px; color: #333; flex: none; }
.field label { width: 22px; }
.inp { width: 33px; height: 11px; background: #fff; font: 9px/11px "Liberation Mono", monospace; padding-left: 2px; color: #222; }
.small .inp { font-size: 7px; }
.coords { height: 11px; flex: none; background: #333; color: #ccc; font: 7.500px/11px "Liberation Sans", sans-serif; padding-left: 1px; white-space: nowrap; }

/* floating tool palette */
.floatbar { width: 41px; flex: none; margin-top: -10px; background: #c6c6c6; display: flex; flex-direction: column; position: relative; z-index: 2; border-right: 1px solid #888; }
.floatbar > * { flex: none; }
.fb-head { height: 13px; background: #5a5a5a; color: #eee; text-align: right; padding-right: 3px; font-size: 10px; line-height: 12px; }
.fb-grip { height: 9px; background: linear-gradient(#e2e2e2, #bdbdbd); margin-bottom: 2px; }
.fb-grid { display: grid; grid-template-columns: 18px 18px; justify-content: center; grid-auto-rows: 15.600px; justify-items: center; align-items: center; }
.fb-grid svg { width: 13px; height: 13px; }
.material { height: 35px; position: relative; margin: 7px 1px 0 3px; }
.m1 { position: absolute; left: 1px; top: 0; width: 20px; height: 20px; background: repeating-linear-gradient(#aaa 0 3px, #ddd 3px 4px); border: 1px solid #888; z-index: 3; }
.m2 { position: absolute; left: 12px; top: 7px; width: 19px; height: 20px; background: linear-gradient(135deg, #2d6b9a, #123a5c); z-index: 2; }
.m3 { position: absolute; left: 19px; top: 15px; width: 17px; height: 20px; background: #eee; border: 1px solid #888; }
.mdot { position: absolute; left: 1px; top: 25px; width: 10px; height: 10px; border-radius: 50%; background: #1e9a5a; border: 2px solid #d9f2e2; z-index: 4; }
.mbtns { display: flex; justify-content: space-around; height: 17px; margin-top: 4px; align-items: center; }
.mbtns svg { width: 14px; height: 14px; background: #aaa; }
.fb-grip.low { margin-top: 4px; }
.second { grid-auto-rows: 15.500px; }

/* centre */
.center { flex: 1; min-width: 0; display: flex; flex-direction: column; }
.viewport { height: 327px; flex: none; border-top: 2px solid #efefef; background: #000; box-shadow: inset 0 1px 0 #333, inset 0 2px 0 #efefef, inset 0 3px 0 #000; padding-top: 3px; overflow: hidden; }
.cad { display: block; stroke: none; }
.status { height: 58px; flex: none; display: flex; background: #a5a5a5; position: relative; }
.st-left { width: 134px; flex: none; display: flex; flex-direction: column; background: #c0c0c0; }
.layouts { height: 13px; flex: none; display: flex; align-items: flex-end; background: #d8d8d8; }
.ltab { width: 33px; height: 11px; padding-left: 6px; background: #ddd; color: #333; font-size: 9px; line-height: 11px; border-right: 1px solid #777; transform: skewX(-8deg); }
.lfill { flex: 1; height: 10px; background: #f2f2f2; border-bottom: 1px solid #999; }
.st-tools { flex: 1; min-height: 0; display: flex; align-items: center; gap: 9px; padding-left: 11px; }
.bigbtn { width: 26px; height: 26px; background: #b2b2b2; display: flex; align-items: center; justify-content: center; }
.bigbtn svg { width: 20px; height: 20px; }
.frac { width: 26px; height: 24px; background: #b8b8b8; display: flex; flex-direction: column; font: 8px/11px "Liberation Mono", monospace; color: #444; padding-left: 4px; }
.xy { width: 26px; display: grid; grid-template-columns: 13px 13px; gap: 1px; }
.globe { width: 12px; height: 12px; border-radius: 50%; background: radial-gradient(circle at 40% 35%, #7cc1ff, #11549c); }
.mono { height: 12px; background: #ddd; font: 8px/12px "Liberation Mono", monospace; color: #446; text-align: center; }
.faint2 { background: #aaa; }
.hatcol { width: 13px; display: flex; flex-direction: column; gap: 2px; margin-left: -4px; }
.hatcol svg, .st-gears svg { width: 12px; height: 12px; }
.st-bar { height: 10px; background: #333; margin: 0 5px 1px 0; flex: none; }
.handle { width: 10px; flex: none; color: #ddd; background: #b8b8b8; text-align: center; font-size: 8px; padding-top: 13px; margin-left: 3px; }
.st-elev { width: 65px; flex: none; display: grid; grid-template-columns: 41px 10px 13px; grid-template-rows: 27px 12px 15px; gap: 1px 0; padding-top: 2px; background: #b9b9b9; }
.el-main { background: #9a9a9a; position: relative; display: flex; align-items: center; padding-left: 5px; }
.el-main svg { width: 14px; height: 20px; stroke: #111; position: relative; }
.el-box { position: absolute; left: 13px; top: 3px; width: 22px; height: 21px; background: linear-gradient(#fff, #ddd); }
.el-side { grid-column: 2 / 4; background: #a4a4a4; display: flex; justify-content: center; align-items: center; }
.el-side svg, .el-side2 svg { width: 14px; height: 18px; }
.el-input { grid-column: 1 / 3; background: #fff; font: 9px/12px "Liberation Sans", sans-serif; color: #333; padding-left: 3px; }
.el-pin svg { width: 12px; height: 12px; display: block; margin: auto; }
.el-label { background: #5c5c5c; color: #ddd; text-align: center; font-size: 9.500px; line-height: 15px; }
.el-side2 { grid-column: 2 / 4; display: flex; justify-content: center; }
.st-pad { width: 50px; flex: none; margin: 3px 0 1px 3px; background: #5c5c5c; border-radius: 3px; padding: 5px; box-shadow: 0 0 0 1px #ccc; }
.lcd { height: 18px; background: #050505; }
.lcd svg { width: 100%; height: 18px; display: block; }
.padbtns { display: grid; grid-template-columns: repeat(3, 1fr); gap: 1px 2px; margin-top: 3px; }
.padbtns span { height: 7px; background: #7c7c7c; border: 1px solid #a8a8a8; }
.st-grid { width: 97px; flex: none; margin: 1px 0 0 5px; display: grid; grid-template-columns: repeat(5, 18px); grid-auto-rows: 18px; gap: 1px; background: #a9a9a9; }
.st-grid span { background: #e4e4e4; display: flex; align-items: center; justify-content: center; }
.st-grid svg { width: 14px; height: 14px; stroke: #222; }
.st-grid .i110 { font: bold 6px "Liberation Mono", monospace; color: #333; }
.st-gears { width: 19px; flex: none; padding: 23px 0 0 2px; display: flex; flex-direction: column; gap: 2px; background: linear-gradient(135deg, #a5a5a5 60%, #d0d0d0 60%); }
.cmd { width: 301px; flex: none; margin: 3px 0 1px 0; background: #cbe7cc; font: 9.600px/11.500px "Liberation Mono", "Noto Sans CJK SC", monospace; color: #222; display: flex; flex-direction: column; }
.cmd p { margin: 0; height: 12.500px; padding-left: 1px; white-space: pre; }
.cmd-hist { height: 41px; padding-top: 1px; border-bottom: 1px solid #888; flex: none; }
.cmd-in { padding: 3px 0 0 1px; }
.st-right { flex: 1; background: #c9c9c9; position: relative; margin-top: 1px; }
.carbtn { position: absolute; right: 1px; top: 35px; width: 19px; height: 11px; background: #aaa; display: flex; justify-content: center; }
.carbtn svg { width: 12px; height: 11px; }
.basebar { flex: 1; background: #2b2b2b; }
.rightedge { width: 7px; flex: none; background: linear-gradient(#26262a, #1a1a22); }

/* dropdown */
.menu { position: absolute; left: 221px; top: 39px; width: 145px; height: 313px; background: #f0f0f0; border: 1px solid #bcbcbc; z-index: 5; box-shadow: 1px 1px 2px rgba(0,0,0,.4); }
.mi { height: 16.300px; display: flex; align-items: center; color: #333; position: relative; }
.mi svg { width: 14px; height: 14px; margin: 0 7px 0 3px; flex: none; }
.mi .noi { width: 24px; flex: none; }
.mi .wheel.mw { margin: 0 9px 0 3px; }
.mi.off { color: #a8a8a8; }
.mi.arrow::after { content: "▸"; position: absolute; right: 7px; top: 3px; font-size: 8px; color: #111; }
.menu hr { border: 0; border-top: 1px solid #d4d4d4; margin: 2.400px 2px 2.400px 25px; height: 0; }
.menu hr.thin { margin: 1.500px 2px 1.500px 25px; }

.anno { position: absolute; left: 0; top: 0; z-index: 6; pointer-events: none; stroke: none; }

/* watermark */
.wm { position: absolute; left: 765px; top: 434px; width: 180px; height: 85px; background: #1f3158; z-index: 7; display: flex; align-items: flex-start; }
.wm-logo { width: 60px; height: 60px; margin: 11px 0 0 5px; stroke: none; flex: none; }
.wm-text { margin: 20px 0 0 -3px; color: #dfe3ea; }
.wm-cn { font: 500 24px/28px "Noto Sans CJK SC", sans-serif; letter-spacing: 2.400px; white-space: nowrap; }
.wm-en { font: 9px/11px "Inter", sans-serif; letter-spacing: 1.950px; margin-top: 3px; color: #c5cbd8; white-space: nowrap; }

/* input method */
.ime { position: absolute; left: 886px; top: 513px; width: 114px; height: 20px; background: #fbfdff; z-index: 8; display: flex; align-items: center; justify-content: space-between; padding: 0 4px 0 5px; color: #1b72d8; font-size: 11px; font-weight: bold; }
.ime svg { width: 12px; height: 12px; fill: #1b72d8; stroke: none; }
.ime svg.ol { fill: none; stroke: #1b72d8; stroke-width: 1.600; }
```
